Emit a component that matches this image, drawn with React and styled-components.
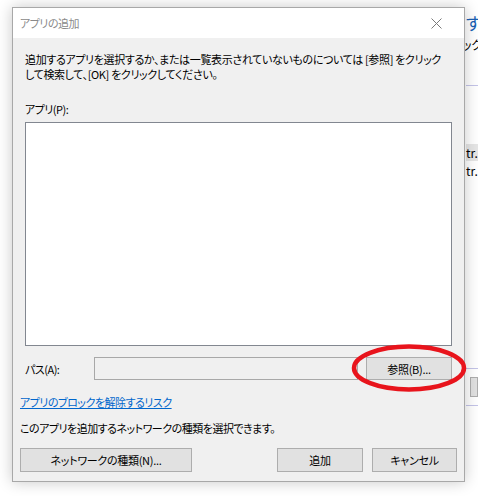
import React from 'react'
import styled, { createGlobalStyle } from 'styled-components'

const GlobalStyle = createGlobalStyle`
  html, body {
    margin: 0;
    padding: 0;
    background: #ffffff;
  }
  body {
    font-family: "Noto Sans CJK JP", "Noto Sans", sans-serif;
    font-size: 11px;
    letter-spacing: -0.5px;
    color: #000;
    font-feature-settings: "palt";
  }
`

const Desktop = styled.div`
  position: relative;
  width: 478px;
  height: 496px;
  overflow: hidden;
  background: #fff;
`

/* window behind the dialog, only its left strip shows at the right */
const BackWindow = styled.div`
  display: flex;
  flex-direction: column;
  padding-left: 466px;
  white-space: nowrap;
  letter-spacing: 0;
  font-size: 12px;
`

const BackHeading = styled.div`
  margin-top: 12px;
  height: 22px;
  line-height: 22px;
  font-size: 17px;
  color: #1a5fb4;
`

const BackText = styled.div`
  margin-top: 2px;
  margin-left: -4px;
  height: 18px;
  line-height: 18px;
`

const BackRule = styled.div`
  margin-top: ${p => p.$top}px;
  height: 1px;
  background: #c4c4e8;
`

const BackRow = styled.div`
  margin-top: ${p => p.$top || 0}px;
  height: 17px;
  line-height: 17px;
  background: ${p => (p.$selected ? '#e6e6e6' : 'transparent')};
`

const BackButton = styled.div`
  margin-top: 8px;
  margin-left: 4px;
  height: 20px;
  background: #e1e1e1;
  border: 1px solid #adadad;
  box-sizing: border-box;
`

const Dialog = styled.div`
  position: absolute;
  left: 12px;
  top: 7px;
  width: 453px;
  height: 475px;
  box-sizing: border-box;
  border: 1px solid #a8a8a8;
  background: #f0f0f0;
  box-shadow: 0 0 14px rgba(0, 0, 0, 0.22);
  display: flex;
  flex-direction: column;
  white-space: nowrap;
`

const TitleBar = styled.div`
  height: 30px;
  background: #fff;
  display: flex;
  align-items: center;
  justify-content: space-between;
  padding: 0 22px 0 7px;
`

const Title = styled.span`
  color: #8a8a8a;
`

const Body = styled.div`
  flex: 1;
  display: flex;
  flex-direction: column;
`

const Upper = styled.div`
  display: flex;
  flex-direction: column;
  padding: 14px 12px 0 12px;
`

const Lower = styled.div`
  display: flex;
  flex-direction: column;
  padding: 0 7px 0 7px;
`

const Text = styled.div`
  line-height: ${p => p.$lh || 16}px;
  margin-top: ${p => p.$top || 0}px;
  letter-spacing: ${p => (p.$wide ? '-0.35px' : 'inherit')};
`

const ListBox = styled.div`
  margin-top: 5px;
  height: 224px;
  box-sizing: border-box;
  background: #fff;
  border: 1px solid #828790;
`

const PathRow = styled.div`
  margin-top: 11px;
  display: flex;
  align-items: center;
`

const PathLabel = styled.span`
  width: 69px;
  line-height: 16px;
`

const PathInput = styled.div`
  flex: 1;
  height: 23px;
  box-sizing: border-box;
  border: 1px solid #a8a8a8;
  background: #f0f0f0;
  margin-right: 8px;
`

const BrowseWrap = styled.div`
  position: relative;
  display: flex;
`

const Button = styled.button`
  width: ${p => p.$w}px;
  height: ${p => p.$h || 23}px;
  box-sizing: border-box;
  background: #e1e1e1;
  border: 1px solid #adadad;
  font-family: inherit;
  font-size: 11px;
  letter-spacing: -0.3px;
  font-feature-settings: "palt";
  color: #000;
  padding: 0;
  display: flex;
  align-items: center;
  justify-content: center;
`

const Mark = styled.svg`
  position: absolute;
  left: -15px;
  top: -14px;
  pointer-events: none;
`

const Link = styled.a`
  margin-top: 14px;
  align-self: flex-start;
  line-height: 16px;
  color: #0066cc;
  text-decoration: underline;
`

const ButtonRow = styled.div`
  margin-top: 12px;
  display: flex;
  align-items: center;
`

const Spacer = styled.div`
  flex: 1;
`

const Gap = styled.div`
  width: 9px;
`

function CloseIcon() {
  return (
    <svg width="11" height="11" viewBox="0 0 11 11">
      <path d="M0.5 0.5 L10.5 10.5 M10.5 0.5 L0.5 10.5" stroke="#7a7a7a" strokeWidth="1" fill="none" />
    </svg>
  )
}

export default function App() {
  return (
    <Desktop>
      <GlobalStyle />
      <BackWindow>
        <BackHeading>す・</BackHeading>
        <BackText>ックリック</BackText>
        <BackRule $top={31} />
        <BackRow $selected $top={58}>tr..</BackRow>
        <BackRow $top={1}>tr..</BackRow>
        <BackRule $top={189} />
        <BackButton />
        <BackRule $top={8} />
      </BackWindow>

      <Dialog>
        <TitleBar>
          <Title>アプリの追加</Title>
          <CloseIcon />
        </TitleBar>
        <Body>
          <Upper>
            <Text $lh={15} $wide>
              追加するアプリを選択するか、または一覧表示されていないものについては [参照] をクリック
              <br />
              して検索して、[OK] をクリックしてください。
            </Text>
            <Text $top={19}>アプリ(P):</Text>
            <ListBox />
            <PathRow>
              <PathLabel>パス(A):</PathLabel>
              <PathInput />
              <BrowseWrap>
                <Button $w={86} $h={23}>参照(B)...</Button>
                <Mark width="116" height="50" viewBox="0 0 116 50">
                  <ellipse cx="58" cy="25" rx="55" ry="21.5" fill="none" stroke="#e8141c" strokeWidth="4.5" />
                </Mark>
              </BrowseWrap>
            </PathRow>
          </Upper>
          <Lower>
            <Link>アプリのブロックを解除するリスク</Link>
            <Text $top={10}>このアプリを追加するネットワークの種類を選択できます。</Text>
            <ButtonRow>
              <Button $w={172} $h={24}>ネットワークの種類(N)...</Button>
              <Spacer />
              <Button $w={86} $h={24}>追加</Button>
              <Gap />
              <Button $w={85} $h={24}>キャンセル</Button>
            </ButtonRow>
          </Lower>
        </Body>
      </Dialog>
    </Desktop>
  )
}
